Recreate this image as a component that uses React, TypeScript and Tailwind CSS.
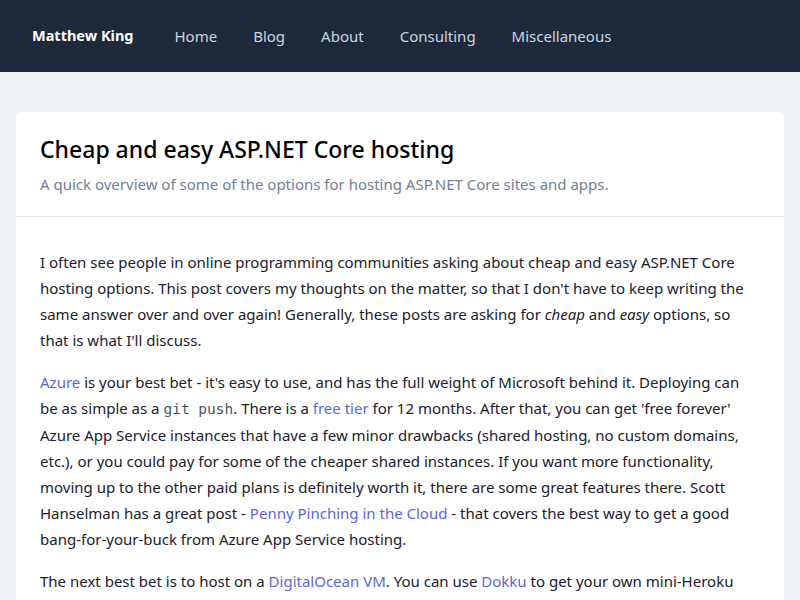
const navItems = ["Home", "Blog", "About", "Consulting", "Miscellaneous"];

const A = ({ children }: { children: React.ReactNode }) => (
  <a href="#" className="text-[#5a67d8]">
    {children}
  </a>
);

export default function App() {
  return (
    <div
      className="min-h-[600px] bg-[#eef1f5] text-[#1a202c]"
      style={{ fontFamily: '"Noto Sans", sans-serif' }}
    >
      <nav className="flex h-[72px] items-center bg-[#1e293b] px-8">
        <span className="text-[14.5px] font-bold text-white">Matthew King</span>
        <ul className="ml-[41px] flex gap-9 text-[15px] text-[#cbd5e0]">
          {navItems.map((item) => (
            <li key={item}>{item}</li>
          ))}
        </ul>
      </nav>

      <main className="px-4 pt-10">
        <article className="rounded-md bg-white">
          <header className="border-b border-[#e2e8f0] px-6 pt-[20px] pb-[20px]">
            <h1 className="text-[23px] leading-[34px] font-medium text-black">
              Cheap and easy ASP.NET Core hosting
            </h1>
            <p className="mt-[6px] text-[15px] leading-[24px] text-[#718096]">
              A quick overview of some of the options for hosting ASP.NET Core
              sites and apps.
            </p>
          </header>

          <div className="space-y-4 px-6 pt-[32px] pb-8 text-[15px] leading-[26px]">
            <p>
              I often see people in online programming communities asking about
              cheap and easy ASP.NET Core hosting options. This post covers my
              thoughts on the matter, so that I don't have to keep writing the
              same answer over and over again! Generally, these posts are asking
              for <em>cheap</em> and <em>easy</em> options, so that is what I'll
              discuss.
            </p>
            <p>
              <A>Azure</A> is your best bet - it's easy to use, and has the full
              weight of Microsoft behind it. Deploying can be as simple as a{" "}
              <code
                className="text-[#4a5568]"
                style={{ fontFamily: '"DejaVu Sans Mono", monospace', fontSize: "14.5px" }}
              >
                git push
              </code>
              . There is a <A>free tier</A> for 12 months. After that, you can
              get 'free forever' Azure App Service instances that have a few minor
              drawbacks (shared hosting, no custom domains, etc.), or you could
              pay for some of the cheaper shared instances. If you want more
              functionality, moving up to the other paid plans is definitely
              worth it, there are some great features there. Scott Hanselman has
              a great post - <A>Penny Pinching in the Cloud</A> - that covers the
              best way to get a good bang-for-your-buck from Azure App Service
              hosting.
            </p>
            <p>
              The next best bet is to host on a <A>DigitalOcean VM</A>. You can
              use <A>Dokku</A> to get your own mini-Heroku running on it, which
              makes deploying apps simple.
            </p>
          </div>
        </article>
      </main>
    </div>
  );
}
